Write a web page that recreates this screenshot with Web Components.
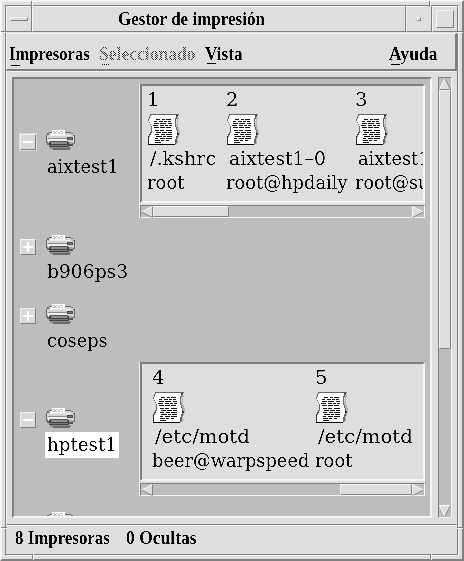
<!DOCTYPE html>
<html lang="es"><head><meta charset="utf-8"><title>Gestor de impresión</title>
<style>
:root{--face:#dedede;--hi:#f5f5f5;--lo:#808080;--well:#bdbdbd}
html,body{margin:0;width:464px;height:561px;overflow:hidden;background:var(--face)}
</style></head><body>
<print-manager></print-manager>
<script>
const define=(name,html,setup)=>customElements.define(name,class extends HTMLElement{
  connectedCallback(){
    if(this.shadowRoot)return;
    const t=document.createElement('template');
    t.innerHTML=typeof html==='function'?html(this):html;
    this.attachShadow({mode:'open'}).append(t.content.cloneNode(true));
    if(setup)setup(this,this.shadowRoot);
  }
});

// One line of bitmap-like text, fitted to the width given in w.
define('bit-text',e=>`<style>
:host{display:block;height:24px;width:${e.getAttribute('w')}px;flex:none;color:#000;position:relative}
span{display:inline-block;white-space:pre;transform-origin:0 0;line-height:24px;font:400 18px/24px "DejaVu Serif",serif;filter:url(#crisp)}
:host([bold]) span{font:700 19px/24px "Liberation Serif",serif}
:host([disabled]) span{color:#303030;}
:host([disabled]){-webkit-mask:repeating-conic-gradient(#000 0 25%,transparent 0 50%) 0 0/2px 2px;mask:repeating-conic-gradient(#000 0 25%,transparent 0 50%) 0 0/2px 2px}
i{position:absolute;left:2px;bottom:${e.getAttribute('mnemonic')||0}px;width:9px;height:1px;background:#000}
svg{position:absolute;width:0;height:0}
</style><svg><filter id="crisp" x="-5%" y="-5%" width="110%" height="110%" color-interpolation-filters="sRGB"><feComponentTransfer><feFuncA type="linear" slope="3.5" intercept="-1.4"/></feComponentTransfer></filter></svg><span>${e.textContent}</span>${e.hasAttribute('mnemonic')?'<i></i>':''}`,
(e,r)=>{const s=r.querySelector('span');s.style.transform=`scaleX(${+e.getAttribute('w')/s.offsetWidth})`});

define('printer-icon',`<style>:host{display:block;width:30px;height:20px}svg{display:block}</style>
<svg width="30" height="20" shape-rendering="crispEdges">
<path d="M4 17h21v2H4z" fill="#8c8c8c"/><path d="M7 18h17v2H7z" fill="#6b6b6b"/>
<path d="M3 2h22v1h2v2h2v9h-2v2H3v-1H1v-2H0V5h1V3h2z" fill="#686868"/>
<path d="M3 3h22v1h2v2h1v7H2v-1H1V5h2z" fill="#d2d2d2"/>
<path d="M4 5h21v1H4z" fill="#ededed"/><path d="M2 8h19v1H2z" fill="#8e8e8e"/><path d="M2 9h19v2H2z" fill="#f0f0f0"/>
<path d="M21 7h6v3h-6z" fill="#505050"/><path d="M22 8h4v1h-4z" fill="#777"/>
<path d="M4 11h18v1H4z" fill="#555"/><path d="M3 12h20v5H3z" fill="#454545"/><path d="M5 12h16v2H5z" fill="#8d8d8d"/>
<path d="M3 15h19v1H3z" fill="#777"/><path d="M23 12h4v2h-4z" fill="#a5a5a5"/><path d="M23 14h4v2h-4z" fill="#555"/>
<path d="M6 0h13v5H5V3h1z" fill="#fff"/><path d="M7 1h2v1H7zM8 2h2v1H8zM10 1h2v1h-2zM12 2h2v1h-2zM14 1h3v1h-3zM7 3h4v1H7zM12 3h2v1h-2zM15 3h2v1h-2z" fill="#c4c4c4"/>
</svg>`);

define('document-icon',`<style>:host{display:block;width:33px;height:33px}svg{display:block}</style>
<svg width="33" height="33" shape-rendering="crispEdges">
<path d="M29 3h2v2h-1v8h1v3h1v5h-1v3h-1v6h-2v1H3v-1h24z" fill="#b5b5b5"/>
<path d="M2 0h29v1h-1v2h-1v2h-1v8h1v3h1v3h1v2h-1v3h-1v5h-1v1H0v-8h1v-2h1v-2h1v-7H2v-2H1v-2H0V5h1V2h1z" fill="#666"/>
<path d="M3 1h26v1h-1v2h-1v9h1v3h1v6h-1v3h-1v5H1v-7h1v-2h1v-2h1v-7H3v-2H2V8H1V5h1V2h1z" fill="#fff"/>
<path d="M0 30h27v1H0z" fill="#000"/><path d="M28 1h2v1h-2zM29 19h2v2h-2zM0 22h1v8H0zM1 20h2v1H1z" fill="#333"/>
<path fill="none" stroke="#111" d="M8 5.500h4m2 0h3m1 0h5M6 7.500h3m2 0h4m1 0h3m1 0h3M6 9.500h5m1 0h6m2 0h4M5 11.500h5m2 0h4m1 0h3m1 0h3M6 13.500h5m1 0h5m1 0h5M7 16.500h4m1 0h4m2 0h6M8 18.500h5m1 0h5m1 0h4M7 20.500h4m2 0h4m1 0h6M8 22.500h6m1 0h3m1 0h5M7 24.500h3m2 0h5m1 0h6M7 26.500h5m1 0h3m2 0h3M7 28.500h6"/>
</svg>`);

define('tree-toggle',e=>`<style>
:host{display:block;box-sizing:border-box;width:16px;height:16px;background:#d9d9d9;border:1px solid;border-color:#f2f2f2 #808080 #808080 #f2f2f2}
:host([focused]){outline:1px solid #dadada}svg{display:block}</style>
<svg width="14" height="14" shape-rendering="crispEdges"><path fill="#fff" d="M2 6h10v2H2z${e.hasAttribute('open')?'':'M6 2h2v10H6z'}"/></svg>`);

define('scroll-arrow',e=>{const d=e.getAttribute('dir');
 const p={left:['11.500,.5 .5,6 11.500,11.500','M11.500 .5L.5 6','M11.500 .5V11.500L.5 6'],right:['.5,.5 11.500,6 .5,11.500','M.5 11.500V.5L11.500 6','M11.500 6L.5 11.500'],up:['6,.5 11.500,11.500 .5,11.500','M.5 11.500L6 .5','M6 .5L11.500 11.500H.5'],down:['.5,.5 11.500,.5 6,11.500','M6 11.500L.5 .5H11.500','M11.500 .5L6 11.500']}[d];
 return `<style>:host{display:block;width:12px;height:12px;flex:none}svg{display:block}</style><svg width="12" height="12"><polygon points="${p[0]}" fill="#dedede"/><path d="${p[1]}" fill="none" stroke="#fafafa"/><path d="${p[2]}" fill="none" stroke="#858585"/></svg>`});

define('scroll-bar',e=>{const v=e.hasAttribute('vertical');return `<style>
:host{display:flex;box-sizing:border-box;flex:none;flex-direction:${v?'column':'row'};background:var(--well);border:1px solid;border-color:var(--lo) var(--hi) var(--hi) var(--lo);${v?'width:14px;height:441px':'width:285px;height:13px'}}
.track{flex:1;display:flex;flex-direction:inherit}
.thumb{box-sizing:border-box;background:var(--face);border:1px solid;border-color:var(--hi) var(--lo) var(--lo) var(--hi);${v?'height':'width'}:${e.getAttribute('size')}px;margin-${v?'top':'left'}:${e.getAttribute('start')}px}
</style><scroll-arrow dir="${v?'up':'left'}"></scroll-arrow><div class="track"><div class="thumb"></div></div><scroll-arrow dir="${v?'down':'right'}"></scroll-arrow>`});

define('print-job',e=>`<style>:host{display:block;flex:none;width:${e.getAttribute('col')}px}
document-icon{margin:2px 0 0 1px}.name{margin-left:3px}</style>
<bit-text w="12">${e.getAttribute('number')}</bit-text><document-icon></document-icon>
<bit-text class="name" w="${e.getAttribute('nw')}">${e.getAttribute('name')}</bit-text>
<bit-text w="${e.getAttribute('uw')}">${e.getAttribute('user')}</bit-text>`);

define('job-list',e=>`<style>
:host{display:block;width:285px;border-left:1px solid #eee;flex:none}
.box{box-sizing:border-box;height:${e.getAttribute('h')}px;border:2px solid;border-color:var(--lo) var(--hi) var(--hi) var(--lo);background:var(--face);display:flex;overflow:hidden;padding:2px 0 0 ${e.getAttribute('inset')}px}
.gap{height:2px;background:var(--face)}
</style><div class="box"><slot></slot></div><div class="gap"></div><scroll-bar start="${e.getAttribute('start')}" size="${e.getAttribute('size')}"></scroll-bar>`);

define('printer-row',e=>`<style>
:host{display:flex;box-sizing:border-box;flex:none;height:${e.getAttribute('h')}px;align-items:flex-start}
.side{width:125px;flex:none;display:grid;grid-template-columns:26px 1fr;box-sizing:border-box;padding:${e.getAttribute('top')}px 0 0 6px}
tree-toggle{margin-top:4px}
.name{margin:4px 0 0 -1px;padding:1px 2px;width:max-content}
:host([selected]) .name{background:#fff}
.name{grid-column:2}
::slotted(job-list){margin-top:${e.getAttribute('jobtop')||0}px}
</style><div class="side"><tree-toggle ${e.hasAttribute('open')?'open':''} ${e.hasAttribute('focused')?'focused':''}></tree-toggle><printer-icon></printer-icon>
${e.getAttribute('label')?`<div class="name"><bit-text w="${e.getAttribute('w')}">${e.getAttribute('label')}</bit-text></div>`:''}</div><slot></slot>`);

define('title-bar',`<style>
:host{display:flex;height:27px;flex:none}
div{box-sizing:border-box;border:1px solid;border-color:var(--hi) var(--lo) var(--lo) var(--hi);height:26px}
.menu{width:26px;display:grid;place-items:center}.menu i{width:18px;height:4px;box-sizing:border-box;border:1px solid;border-color:var(--hi) var(--lo) var(--lo) var(--hi)}
.title{flex:1;padding-left:85px}.min,.max{width:26px;display:grid;place-items:center}
.min i{width:4px;height:4px}.max i{width:18px;height:18px}.min i,.max i{box-sizing:border-box;border:1px solid;border-color:var(--hi) var(--lo) var(--lo) var(--hi)}
</style><div class="menu"><i></i></div><div class="title"><slot></slot></div><div class="min"><i></i></div><div class="max"><i></i></div>`);

define('menu-bar',`<style>
:host{display:flex;box-sizing:border-box;height:38px;margin-right:0;flex:none;padding:8px 18px 0 2px;border:1px solid;border-color:var(--hi) var(--lo) var(--lo) var(--hi);border-bottom-width:2px;border-right-width:2px}
</style><slot></slot>`);

define('status-bar',`<style>
:host{display:flex;box-sizing:border-box;flex:1;gap:16px;padding:0 0 0 9px;border-top:1px solid var(--hi)}
</style><slot></slot>`);

define('window-frame',`<style>
:host{display:flex;flex-direction:column;position:relative;box-sizing:border-box;width:464px;height:561px;background:var(--face);border:2px solid;border-color:var(--hi) var(--lo) var(--lo) var(--hi);padding:3px}
.inner{flex:1;min-height:0;display:flex;flex-direction:column;border:1px solid;border-color:var(--lo) var(--hi) var(--hi) var(--lo)}
i{position:absolute;box-sizing:border-box}
.v{width:2px;height:6px;border-left:1px solid var(--lo);border-right:1px solid var(--hi)}
.h{width:6px;height:2px;border-top:1px solid var(--lo);border-bottom:1px solid var(--hi)}
</style><div class="inner"><slot></slot></div>
<i class="v" style="left:29px;top:-1px"></i><i class="v" style="right:31px;top:-1px"></i><i class="v" style="left:30px;bottom:-1px"></i><i class="v" style="right:30px;bottom:-1px"></i>
<i class="h" style="left:-1px;top:29px"></i><i class="h" style="right:-1px;top:29px"></i><i class="h" style="left:-1px;bottom:30px"></i><i class="h" style="right:-1px;bottom:30px"></i>`);

define('print-manager',`<style>
:host{display:block}
.client{flex:1;min-height:0;display:flex;flex-direction:column;box-sizing:border-box;border-right:1px solid var(--lo);border-bottom:1px solid var(--lo)}
.work{height:454px;flex:none;box-sizing:border-box;display:flex;gap:6px;padding:5px 0 0 5px;border:1px solid;border-color:var(--hi) transparent var(--lo) var(--hi)}
.tree{box-sizing:border-box;width:420px;height:441px;overflow:hidden;background:var(--well);border:2px solid;border-color:var(--lo) var(--hi) var(--hi) var(--lo);display:flex;flex-direction:column}
.a{margin-left:auto}.sel{margin-left:9px}.vis{margin-left:9px}
</style>
<window-frame>
<title-bar><bit-text bold w="147">Gestor de impresión</bit-text></title-bar>
<div class="client">
<menu-bar><bit-text bold mnemonic w="81">Impresoras</bit-text><bit-text class="sel" bold disabled mnemonic="1" w="97">Seleccionado</bit-text><bit-text class="vis" bold mnemonic="2" w="38">Vista</bit-text><bit-text class="a" bold mnemonic="1" w="48">Ayuda</bit-text></menu-bar>
<div class="work"><div class="tree">
<printer-row h="151" top="51" open focused label="aixtest1" w="71" jobtop="5"><job-list h="119" inset="5" start="0" size="76">
<print-job col="79" number="1" name="/.kshrc" nw="66" user="root" uw="38"></print-job>
<print-job col="129" number="2" name="aixtest1–0" nw="97" user="root@hpdaily" uw="122"></print-job>
<print-job col="129" number="3" name="aixtest1" nw="71" user="root@su" uw="74"></print-job>
</job-list></printer-row>
<printer-row h="69" top="5" label="b906ps3" w="81"></printer-row>
<printer-row h="63" top="5" label="coseps" w="61"></printer-row>
<printer-row h="146" top="46" open selected label="hptest1" w="70"><job-list h="119" inset="10" start="187" size="72">
<print-job col="163" number="4" name="/etc/motd" nw="95" user="beer@warpspeed" uw="157"></print-job>
<print-job col="129" number="5" name="/etc/motd" nw="95" user="root" uw="38"></print-job>
</job-list></printer-row>
<printer-row h="69" top="4"></printer-row>
</div><scroll-bar vertical start="0" size="259"></scroll-bar></div>
<status-bar><bit-text bold w="95">8 Impresoras</bit-text><bit-text bold w="71">0 Ocultas</bit-text></status-bar>
</div></window-frame>`);
</script></body></html>
